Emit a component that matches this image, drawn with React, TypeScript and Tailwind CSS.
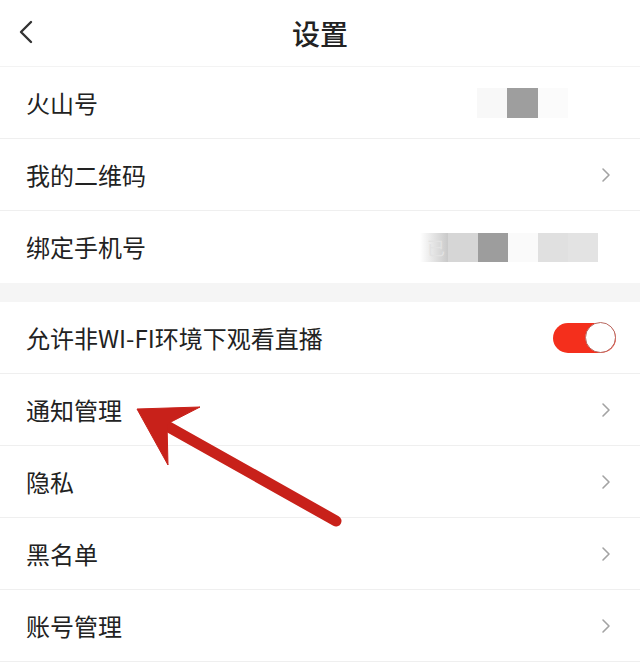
import { ReactNode } from 'react';

function Chevron() {
  return (
    <svg width="10" height="16" viewBox="0 0 10 16" className="shrink-0">
      <path d="M2 2 L8 8 L2 14" fill="none" stroke="#a3a3a3" strokeWidth="1.6" strokeLinecap="round" strokeLinejoin="round" />
    </svg>
  );
}

function Row({ label, right, last }: { label: string; right?: ReactNode; last?: boolean }) {
  return (
    <div className={`h-[72px] flex items-center justify-between pl-[26px] pr-[29px] ${last ? '' : 'border-b border-[#efefef]'}`}>
      <span className="text-[24px] text-[#222] leading-none">{label}</span>
      {right}
    </div>
  );
}

export default function App() {
  return (
    <div
      className="relative w-[640px] h-[665px] bg-white overflow-hidden"
      style={{ fontFamily: '"Noto Sans CJK SC", "Noto Sans", sans-serif' }}
    >
      {/* 顶部栏 */}
      <div className="h-[67px] flex items-center justify-center relative border-b border-[#f3f3f3]">
        <svg width="16" height="24" viewBox="0 0 16 24" className="absolute left-[18px] top-[20px]">
          <path d="M13 2 L3 12 L13 22" fill="none" stroke="#333" strokeWidth="2.4" strokeLinecap="round" strokeLinejoin="round" />
        </svg>
        <h1 className="text-[28px] text-[#222] font-medium leading-none">设置</h1>
      </div>

      {/* 账号信息 */}
      <div>
        <Row
          label="火山号"
          right={
            <div className="flex items-center mr-[43px]">
              <div className="w-[30px] h-[30px] bg-[#f8f8f8]" />
              <div className="w-[31px] h-[30px] bg-[#9e9e9e]" />
              <div className="w-[30px] h-[30px] bg-[#fbfbfb]" />
            </div>
          }
        />
        <Row label="我的二维码" right={<Chevron />} />
        <Row
          label="绑定手机号"
          right={
            <div className="flex items-center mr-[13px]">
              <div className="w-[28px] h-[29px] bg-gradient-to-r from-white to-[#c9c9c9] flex items-center justify-end pr-[3px] text-[18px] text-[#e2e2e2] leading-none">已</div>
              <div className="w-[30px] h-[29px] bg-[#d6d6d6]" />
              <div className="w-[30px] h-[29px] bg-[#9d9d9d]" />
              <div className="w-[30px] h-[29px] bg-[#fafafa]" />
              <div className="w-[30px] h-[29px] bg-[#e0e0e0]" />
              <div className="w-[30px] h-[29px] bg-[#e3e3e3]" />
            </div>
          }
          last
        />
      </div>

      <div className="h-[19px] bg-[#f5f5f5]" />

      {/* 设置项 */}
      <div>
        <Row
          label="允许非WI-FI环境下观看直播"
          right={
            <div className="w-[63px] h-[30px] rounded-full bg-[#f42f1c] flex items-center justify-end -mr-[5px]">
              <div className="w-[31px] h-[31px] rounded-full bg-white border border-[#b86a62]" />
            </div>
          }
        />
        <Row label="通知管理" right={<Chevron />} />
        <Row label="隐私" right={<Chevron />} />
        <Row label="黑名单" right={<Chevron />} />
        <Row label="账号管理" right={<Chevron />} />
      </div>

      {/* 红色箭头 */}
      <svg width="640" height="665" viewBox="0 0 640 665" className="absolute inset-0 pointer-events-none">
        <line x1="158" y1="421" x2="336" y2="521" stroke="#c8211a" strokeWidth="11" strokeLinecap="round" />
        <polygon points="137,409 200,407 167,424 168,465" fill="#c8211a" stroke="#c8211a" strokeWidth="1" strokeLinejoin="round" />
      </svg>
    </div>
  );
}
